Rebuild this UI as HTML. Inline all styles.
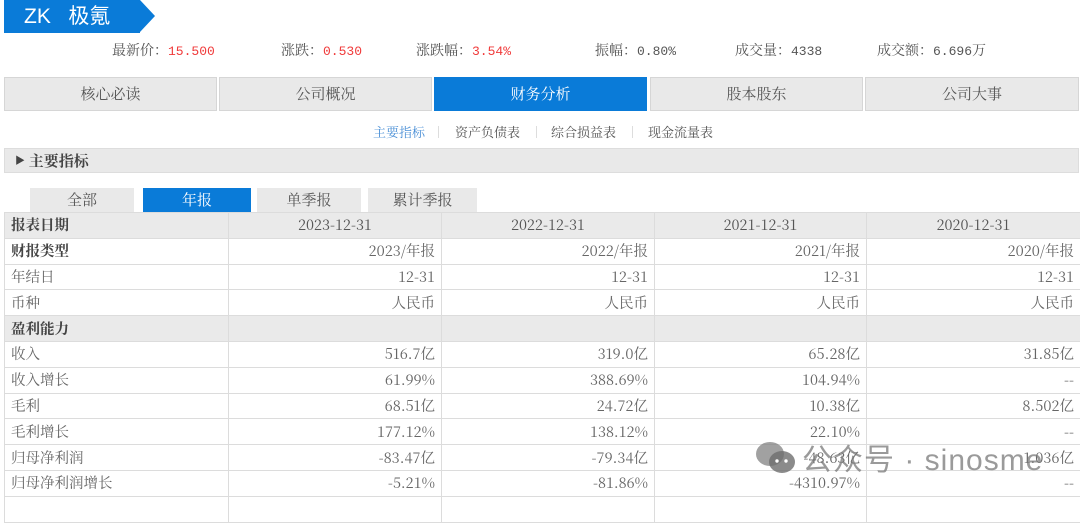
<!DOCTYPE html>
<html><head><meta charset="utf-8"><style>
*{margin:0;padding:0;box-sizing:border-box}
body{width:1080px;height:500px;overflow:hidden;background:#fff;font-family:"Noto Serif CJK SC","Liberation Serif",serif;color:#555;font-size:14px;position:relative}
.abs{position:absolute}
.m{font-family:"Liberation Mono",monospace;font-size:13px}
.rib{left:4px;top:0;width:136px;height:33px;background:#0a7bd8;color:#fff;font-family:"Liberation Sans","Noto Sans CJK SC",sans-serif;font-size:21px;line-height:33px;padding-left:20px}
.rib:after{content:"";position:absolute;left:136px;top:0;border-left:15px solid #0a7bd8;border-top:16.5px solid transparent;border-bottom:16.5px solid transparent}
.info{top:40px;font-size:14px;line-height:20px}
.info b{font-weight:normal;color:#f03a3a}
.nav{top:77px;height:34px;background:#e9e9e9;border:1px solid #d6d6d6;text-align:center;line-height:32px;font-size:15px}
.nav.on{background:#0a7bd8;color:#fff;border-color:#0a7bd8}
.sub{top:122px;font-size:13px;line-height:20px}
.sep{top:126px;width:1px;height:12px;background:#ddd}
.bar{left:4px;top:148px;width:1075px;height:25px;background:#e9e9e9;border:1px solid #ddd;font-weight:bold;font-size:15px;line-height:23px;padding-left:10px;color:#444}
.tb{top:188px;height:24px;background:#e9e9e9;text-align:center;line-height:24px;font-size:15px}
.tb.on{background:#0a7bd8;color:#fff}
table{position:absolute;left:4px;top:212px;border-collapse:collapse;width:1076px;table-layout:fixed}
td{border:1.5px solid #dcdcdc;height:25.8px;padding:0 6px;font-size:14.5px;text-align:right;line-height:20px;white-space:nowrap;color:#666}
td:first-child{text-align:left}
tr.g td{background:#eaeaea}
tr.b td:first-child{font-weight:bold;color:#444}
tr.h td{text-align:center;color:#555}
tr.h td:first-child{text-align:left}
.wm{top:441px;font-family:"Liberation Sans","Noto Sans CJK SC",sans-serif;font-size:30px;color:rgba(120,120,120,.75);letter-spacing:1px;line-height:40px}
</style></head><body>
<div class="abs rib">ZK&nbsp;&nbsp;&nbsp;极氪</div>
<div class="abs info" style="left:112px">最新价：<b class="m">15.500</b></div>
<div class="abs info" style="left:281px">涨跌：<b class="m">0.530</b></div>
<div class="abs info" style="left:416px">涨跌幅：<b class="m">3.54%</b></div>
<div class="abs info" style="left:595px">振幅：<span class="m">0.80%</span></div>
<div class="abs info" style="left:735px">成交量：<span class="m">4338</span></div>
<div class="abs info" style="left:877px">成交额：<span class="m">6.696</span>万</div>
<div class="abs nav" style="left:4px;width:213px">核心必读</div>
<div class="abs nav" style="left:219px;width:213px">公司概况</div>
<div class="abs nav on" style="left:434px;width:213px">财务分析</div>
<div class="abs nav" style="left:650px;width:213px">股本股东</div>
<div class="abs nav" style="left:865px;width:214px">公司大事</div>
<div class="abs sub" style="left:373px;color:#4a8fd6">主要指标</div>
<div class="abs sep" style="left:438px"></div>
<div class="abs sub" style="left:455px">资产负债表</div>
<div class="abs sep" style="left:536px"></div>
<div class="abs sub" style="left:551px">综合损益表</div>
<div class="abs sep" style="left:632px"></div>
<div class="abs sub" style="left:648px">现金流量表</div>
<div class="abs bar"><span style="font-size:10px;position:relative;top:-2px">▶</span> 主要指标</div>
<div class="abs tb" style="left:30px;width:104px">全部</div>
<div class="abs tb on" style="left:143px;width:108px">年报</div>
<div class="abs tb" style="left:257px;width:104px">单季报</div>
<div class="abs tb" style="left:368px;width:109px">累计季报</div>
<table>
<colgroup><col style="width:224px"><col style="width:213px"><col style="width:213px"><col style="width:212px"><col style="width:214px"></colgroup>
<tr class="g b h"><td>报表日期</td><td>2023-12-31</td><td>2022-12-31</td><td>2021-12-31</td><td>2020-12-31</td></tr>
<tr class="b"><td>财报类型</td><td>2023/年报</td><td>2022/年报</td><td>2021/年报</td><td>2020/年报</td></tr>
<tr><td>年结日</td><td>12-31</td><td>12-31</td><td>12-31</td><td>12-31</td></tr>
<tr><td>币种</td><td>人民币</td><td>人民币</td><td>人民币</td><td>人民币</td></tr>
<tr class="g b"><td>盈利能力</td><td></td><td></td><td></td><td></td></tr>
<tr><td>收入</td><td>516.7亿</td><td>319.0亿</td><td>65.28亿</td><td>31.85亿</td></tr>
<tr><td>收入增长</td><td>61.99%</td><td>388.69%</td><td>104.94%</td><td>--</td></tr>
<tr><td>毛利</td><td>68.51亿</td><td>24.72亿</td><td>10.38亿</td><td>8.502亿</td></tr>
<tr><td>毛利增长</td><td>177.12%</td><td>138.12%</td><td>22.10%</td><td>--</td></tr>
<tr><td>归母净利润</td><td>-83.47亿</td><td>-79.34亿</td><td>-48.63亿</td><td>1.036亿</td></tr>
<tr><td>归母净利润增长</td><td>-5.21%</td><td>-81.86%</td><td>-4310.97%</td><td>--</td></tr>
<tr><td>&nbsp;</td><td></td><td></td><td></td><td></td></tr>
</table>
<svg class="abs" style="left:755px;top:440px" width="42" height="36" viewBox="0 0 42 36"><ellipse cx="15" cy="14" rx="14" ry="12" fill="rgba(130,130,130,.75)"/><ellipse cx="27" cy="22" rx="13" ry="11" fill="rgba(110,110,110,.8)"/><circle cx="22" cy="21" r="1.7" fill="#fff"/><circle cx="31" cy="21" r="1.7" fill="#fff"/></svg>
<div class="abs wm" style="left:802px">公众号 · sinosme</div>
</body></html>
